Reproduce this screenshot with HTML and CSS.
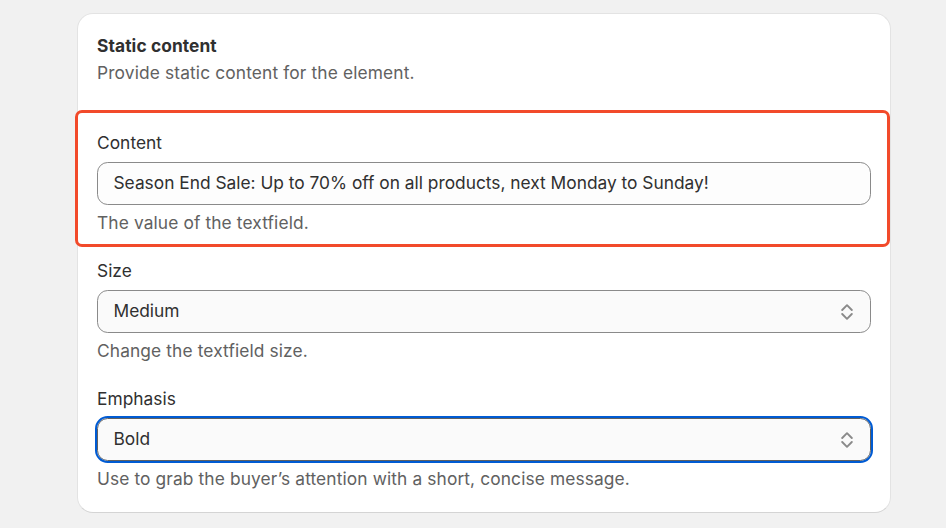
FILE: index.html
```html
<!DOCTYPE html>
<html lang="en">
<head>
<meta charset="utf-8">
<title>Static content</title>
<link rel="stylesheet" href="styles.css">
</head>
<body>
<div class="card">
  <div class="header">
    <h2 class="title">Static content</h2>
    <p class="subtitle">Provide static content for the element.</p>
  </div>
  <div class="fields">
    <div class="field highlighted">
      <label class="label">Content</label>
      <div class="control">
        <span class="value">Season End Sale: Up to 70% off on all products, next Monday to Sunday!</span>
      </div>
      <p class="help">The value of the textfield.</p>
    </div>
    <div class="field">
      <label class="label">Size</label>
      <div class="control select">
        <span class="value">Medium</span>
        <svg class="chev" width="12" height="18" viewBox="0 0 12 18" aria-hidden="true"><path d="M1.2 7 L6 2.2 L10.8 7 M1.2 11 L6 15.8 L10.8 11" fill="none" stroke="#8a8a8a" stroke-width="1.9" stroke-linecap="round" stroke-linejoin="round"/></svg>
      </div>
      <p class="help">Change the textfield size.</p>
    </div>
    <div class="field">
      <label class="label">Emphasis</label>
      <div class="control select focused">
        <span class="value">Bold</span>
        <svg class="chev" width="12" height="18" viewBox="0 0 12 18" aria-hidden="true"><path d="M1.2 7 L6 2.2 L10.8 7 M1.2 11 L6 15.8 L10.8 11" fill="none" stroke="#8a8a8a" stroke-width="1.9" stroke-linecap="round" stroke-linejoin="round"/></svg>
      </div>
      <p class="help">Use to grab the buyer’s attention with a short, concise message.</p>
    </div>
  </div>
</div>
</body>
</html>
```
FILE: styles.css
```css
* { box-sizing: border-box; }
html, body { margin: 0; padding: 0; }
body {
  background: #f1f1f1;
  font-family: Inter, "Noto Sans", sans-serif;
  font-size: 17.33px;
  line-height: 26.67px;
  color: #303030;
  height: 528px;
  overflow: hidden;
}
.card {
  margin: 13px 0 0 77px;
  width: 814px;
  height: 500px;
  background: #fff;
  border: 1px solid #e3e3e3;
  border-bottom-color: #d4d4d4;
  border-radius: 16px;
  padding: 19px 19px 0 19px;
}
.title {
  margin: 0;
  font-size: 17.33px;
  line-height: 26.67px;
  font-weight: 650;
  letter-spacing: 0.1px;
  color: #303030;
}
.subtitle {
  margin: 0;
  color: #616161;
  letter-spacing: 0.14px;
}
.fields {
  margin-top: 44px;
  display: flex;
  flex-direction: column;
  gap: 21.33px;
}
.field {
  position: relative;
  display: flex;
  flex-direction: column;
  gap: 5.33px;
}
.field.highlighted::before {
  content: "";
  position: absolute;
  top: -20px;
  bottom: -10px;
  left: -22px;
  right: -19px;
  border: 3px solid #f24a2a;
  border-radius: 7px;
  pointer-events: none;
}
.label {
  display: block;
  color: #303030;
  letter-spacing: 0.03px;
}
.control {
  height: 42.67px;
  border: 1px solid #8a8a8a;
  border-radius: 10.67px;
  background: #fdfdfd;
  padding: 0 16px 0 15.5px;
  display: flex;
  align-items: center;
  justify-content: space-between;
  color: #303030;
}
.select { background: #fafafa; }
.focused {
  border-color: #616161;
  outline: 2px solid #005bd3;
  outline-offset: 0.5px;
}
.chev { display: block; margin-right: 1px; }
.help {
  margin: 0;
  color: #616161;
  letter-spacing: 0.12px;
}
```
